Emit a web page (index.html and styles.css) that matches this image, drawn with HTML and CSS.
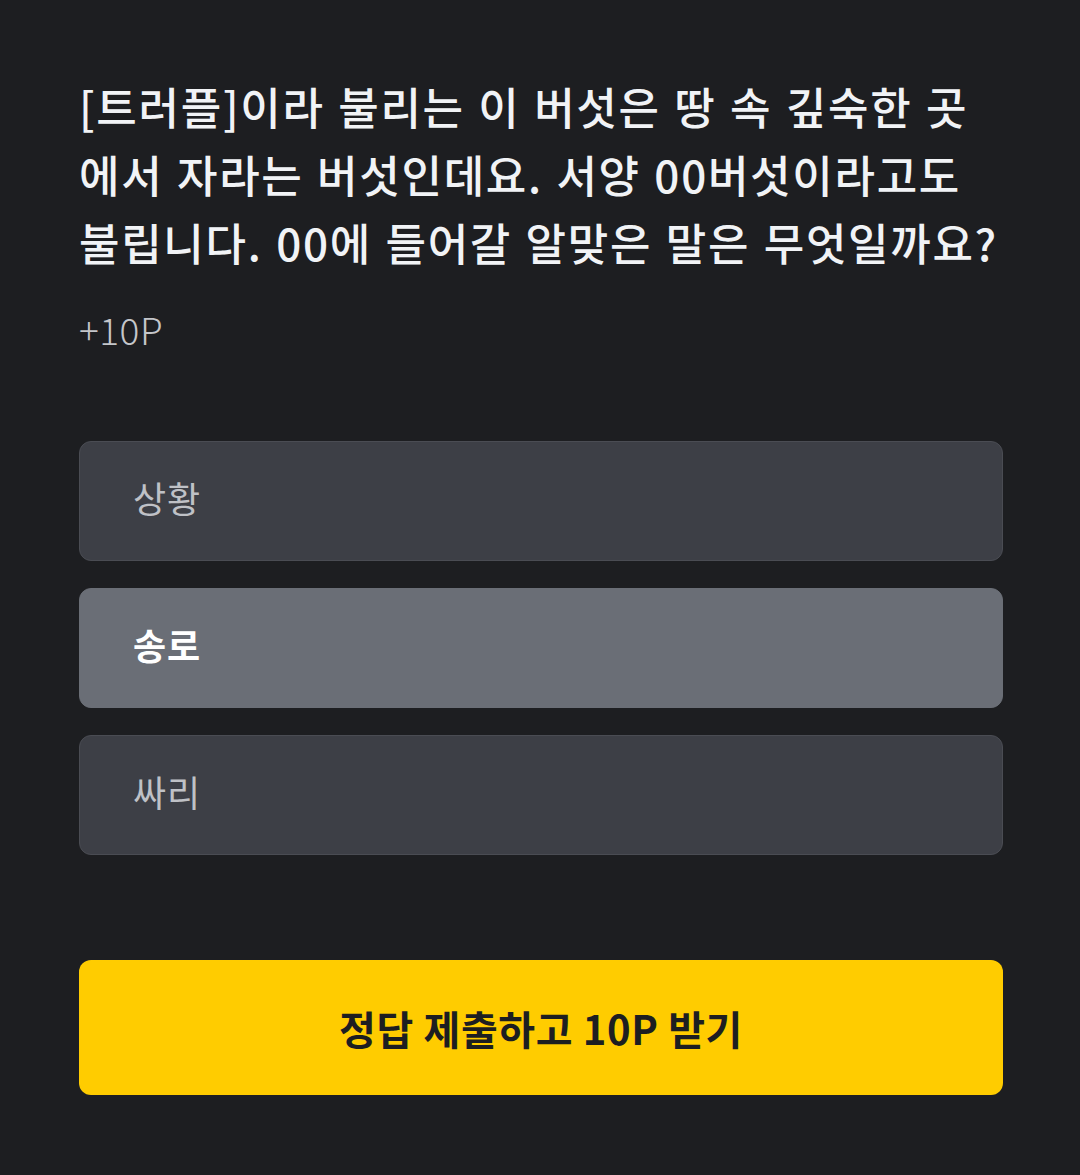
FILE: index.html
```html
<html>
  <head>
    <title>Quiz</title>
    <link rel="stylesheet" href="styles.css">
  </head>
  <body>
    <div class="quiz">
      <h2 class="question">
        [트러플]이라 불리는 이 버섯은 땅 속 깊숙한 곳<br />에서 자라는 버섯인데요. 서양 00버섯이라고도<br />불립니다. 00에 들어갈 알맞은 말은 무엇일까요?
      </h2>
      <div class="points">+10P</div>
      <div class="options">
        <div class="option">상황</div>
        <div class="option selected">송로</div>
        <div class="option">싸리</div>
      </div>
      <button class="submit" type="button">정답 제출하고 10P 받기</button>
    </div>
  </body>
</html>
```

FILE: styles.css
```css
body {
  margin: 0;
  background-color: #1d1e21;
  color: #f1f3f6;
  font-family: "Noto Sans CJK KR", "Noto Sans", sans-serif;
}
.quiz {
  padding: 72px 77px 0 79px;
}
.question {
  margin: 0;
  font-size: 44px;
  font-weight: 500;
  line-height: 68px;
  letter-spacing: 1.7px;
  word-spacing: 2px;
}
.points {
  margin-top: 26px;
  font-size: 37px;
  font-weight: 300;
  letter-spacing: 0.5px;
  color: #c4c6ca;
}
.options {
  display: flex;
  flex-direction: column;
  gap: 27px;
  margin-top: 85px;
}
.option {
  box-sizing: border-box;
  height: 120px;
  display: flex;
  align-items: center;
  padding: 0 0 8px 53px;
  border-radius: 12px;
  background-color: #3d3f46;
  border: 1px solid #4a4c53;
  color: #bfc1c6;
  font-size: 36px;
  letter-spacing: 1px;
}
.option.selected {
  background-color: #6a6e76;
  border-color: #6a6e76;
  color: #ffffff;
  font-weight: 700;
}
.submit {
  display: block;
  width: 100%;
  height: 135px;
  margin-top: 105px;
  border: none;
  border-radius: 12px;
  background-color: #ffcc00;
  color: #1d1e21;
  font-family: inherit;
  font-size: 40px;
  font-weight: 700;
  letter-spacing: 0.6px;
}
```
